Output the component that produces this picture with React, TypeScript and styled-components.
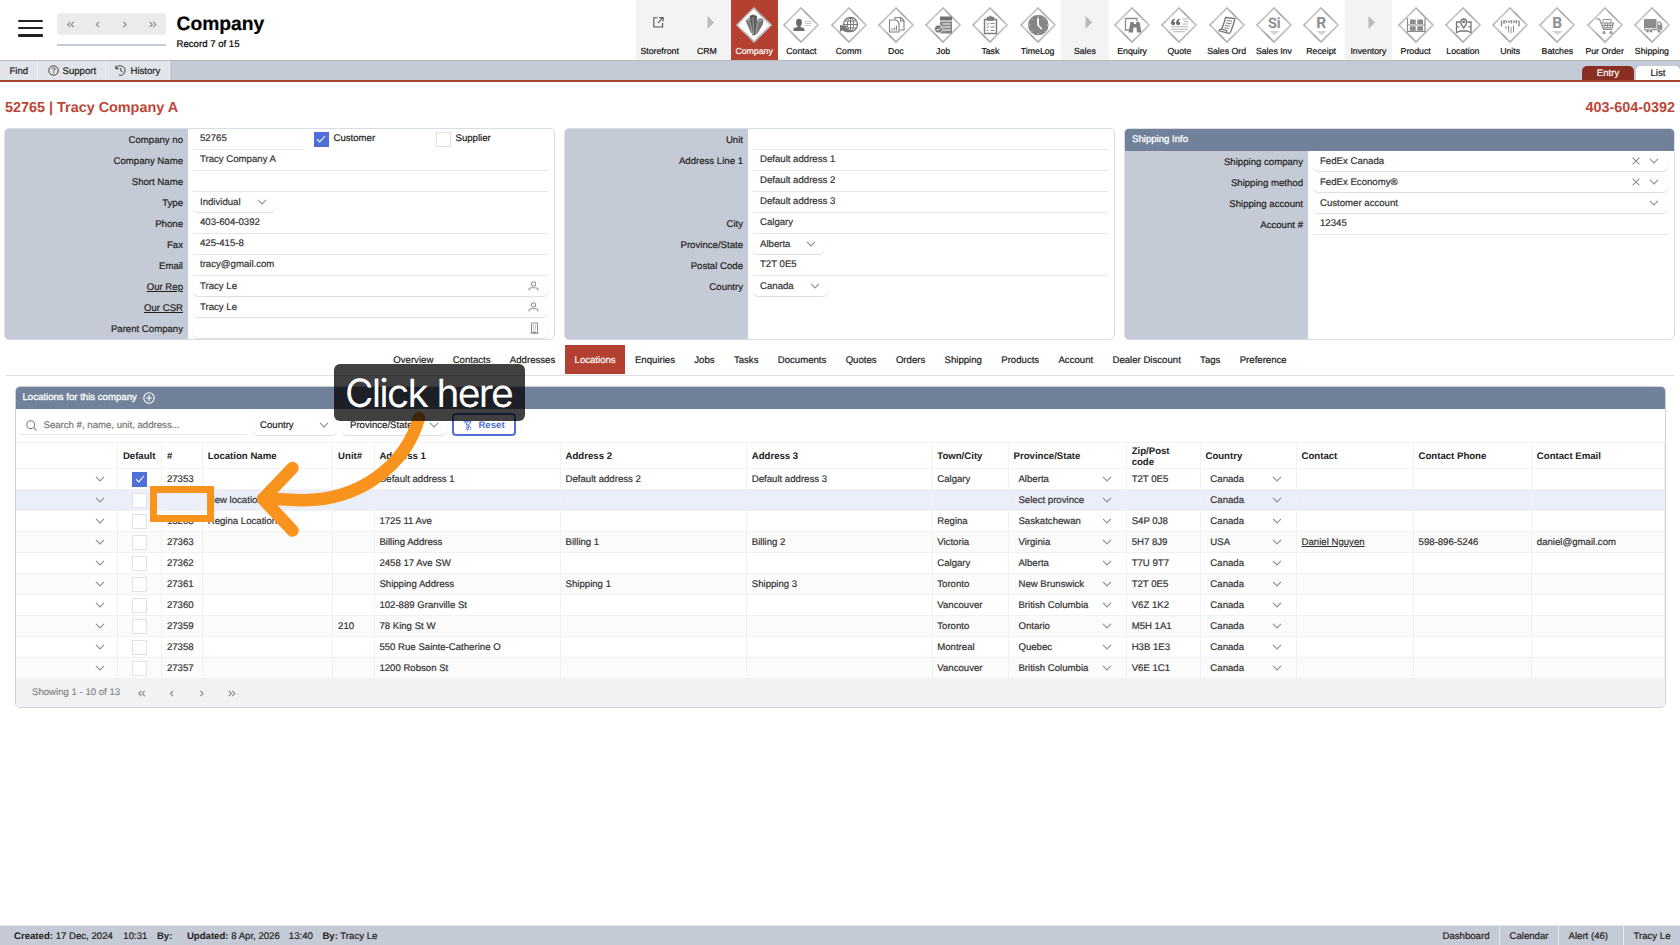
import React from 'react';
import styled, {createGlobalStyle, css} from 'styled-components';

const colors = {
    red: '#b34030',
    redDark: '#8a2f23',
    redText: '#bc4637',
    slate: '#708199',
    bar: '#c5cbd6',
    barLight: '#e1e5eb',
    blue: '#5070d8',
    line: '#e6e6e6',
    cellLine: '#f1f1f2',
    icon: '#8c8c8c',
    orange: '#f8941d',
};

const modules = [
    'Storefront',
    'CRM',
    'Company',
    'Contact',
    'Comm',
    'Doc',
    'Job',
    'Task',
    'TimeLog',
    'Sales',
    'Enquiry',
    'Quote',
    'Sales Ord',
    'Sales Inv',
    'Receipt',
    'Inventory',
    'Product',
    'Location',
    'Units',
    'Batches',
    'Pur Order',
    'Shipping',
];
const groups = ['Storefront', 'CRM', 'Sales', 'Inventory'];

const tabs = [
    'Overview',
    'Contacts',
    'Addresses',
    'Locations',
    'Enquiries',
    'Jobs',
    'Tasks',
    'Documents',
    'Quotes',
    'Orders',
    'Shipping',
    'Products',
    'Account',
    'Dealer Discount',
    'Tags',
    'Preference',
];

const headers = [
    '',
    'Default',
    '#',
    'Location Name',
    'Unit#',
    'Address 1',
    'Address 2',
    'Address 3',
    'Town/City',
    'Province/State',
    'Zip/Post code',
    'Country',
    'Contact',
    'Contact Phone',
    'Contact Email',
];

interface ILocation {
    no: string;
    name?: string;
    unit?: string;
    address: string[];
    city?: string;
    province: string;
    zip?: string;
    country: string;
    contact?: string;
    phone?: string;
    email?: string;
    isDefault?: boolean;
    selected?: boolean;
}

const locations: ILocation[] = [
    {
        no: '27353',
        address: ['Default address 1', 'Default address 2', 'Default address 3'],
        city: 'Calgary',
        province: 'Alberta',
        zip: 'T2T 0E5',
        country: 'Canada',
        isDefault: true,
    },
    {
        no: '',
        name: 'New location',
        address: ['', '', ''],
        province: 'Select province',
        country: 'Canada',
        selected: true,
    },
    {
        no: '13208',
        name: 'Regina Location',
        address: ['1725 11 Ave', '', ''],
        city: 'Regina',
        province: 'Saskatchewan',
        zip: 'S4P 0J8',
        country: 'Canada',
    },
    {
        no: '27363',
        address: ['Billing Address', 'Billing 1', 'Billing 2'],
        city: 'Victoria',
        province: 'Virginia',
        zip: '5H7 8J9',
        country: 'USA',
        contact: 'Daniel Nguyen',
        phone: '598-896-5246',
        email: 'daniel@gmail.com',
    },
    {
        no: '27362',
        address: ['2458 17 Ave SW', '', ''],
        city: 'Calgary',
        province: 'Alberta',
        zip: 'T7U 9T7',
        country: 'Canada',
    },
    {
        no: '27361',
        address: ['Shipping Address', 'Shipping 1', 'Shipping 3'],
        city: 'Toronto',
        province: 'New Brunswick',
        zip: 'T2T 0E5',
        country: 'Canada',
    },
    {
        no: '27360',
        address: ['102-889 Granville St', '', ''],
        city: 'Vancouver',
        province: 'British Columbia',
        zip: 'V6Z 1K2',
        country: 'Canada',
    },
    {
        no: '27359',
        unit: '210',
        address: ['78 King St W', '', ''],
        city: 'Toronto',
        province: 'Ontario',
        zip: 'M5H 1A1',
        country: 'Canada',
    },
    {
        no: '27358',
        address: ['550 Rue Sainte-Catherine O', '', ''],
        city: 'Montreal',
        province: 'Quebec',
        zip: 'H3B 1E3',
        country: 'Canada',
    },
    {
        no: '27357',
        address: ['1200 Robson St', '', ''],
        city: 'Vancouver',
        province: 'British Columbia',
        zip: 'V6E 1C1',
        country: 'Canada',
    },
];

/* ---------- icons ---------- */

const ChevronDown = () => (
    <svg width='10' height='6' viewBox='0 0 10 6' fill='none'>
        <path d='M1 0.8 5 4.9 9 0.8' stroke='#8f8f8f' strokeWidth='1.1' />
    </svg>
);

const arrows = {
    first: 'M5 1 2 4 5 7M9 1 6 4 9 7',
    prev: 'M7 1 4 4 7 7',
    next: 'M4 1 7 4 4 7',
    last: 'M2 1 5 4 2 7M6 1 9 4 6 7',
};

const Arrow = ({kind}: {kind: keyof typeof arrows}) => (
    <svg width='9.5' height='7' viewBox='0 0 11 8' fill='none'>
        <path d={arrows[kind]} stroke='#8e8e8e' strokeWidth='1.4' />
    </svg>
);

const Cross = () => (
    <svg width='8' height='8' viewBox='0 0 8 8' fill='none'>
        <path d='M0.6 0.6 7.4 7.4M7.4 0.6 0.6 7.4' stroke='#8f8f8f' strokeWidth='1.1' />
    </svg>
);

const PersonIcon = () => (
    <svg width='11' height='10' viewBox='0 0 11 10' fill='none' stroke='#969696' strokeWidth='1.1'>
        <circle cx='5.5' cy='2.9' r='2.1' />
        <path d='M1 9.6V9c0-1.4 1-2.3 2.4-2.3h4.2C9 6.7 10 7.6 10 9v.6' />
    </svg>
);

const BuildingIcon = () => (
    <svg width='9' height='12' viewBox='0 0 9 12' fill='none' stroke='#8f8f8f'>
        <path d='M1.5 1h6v10h-6zM0.5 11h8' />
        <path d='M3 3.2h1M5 3.2h1M3 5.2h1M5 5.2h1M3 7.2h1M5 7.2h1M4 9v2h1V9' strokeWidth='0.9' />
    </svg>
);

const CheckIcon = () => (
    <svg width='10' height='8' viewBox='0 0 10 8' fill='none'>
        <path d='M1 4.2 3.7 6.9 9 1' stroke='#fff' strokeWidth='1.1' />
    </svg>
);

const HelpIcon = () => (
    <svg width='11' height='11' viewBox='0 0 22 22' fill='none' stroke='#333' strokeWidth='1.9'>
        <circle cx='11' cy='11' r='9.5' />
        <path d='M8 8.5c0-1.7 1.3-2.9 3-2.9s3 1.2 3 2.7c0 2.2-3 2.3-3 4.7M11 14.8v2' />
    </svg>
);

const HistoryIcon = () => (
    <svg width='11' height='11' viewBox='0 0 22 22' fill='none' stroke='#333' strokeWidth='1.9'>
        <path d='M1.5 1.5v6h6M2.2 7A9.3 9.3 0 1 1 8 20' />
        <path d='M11.5 6v5.5l4 2.5' />
    </svg>
);

const SearchIcon = () => (
    <svg width='11' height='11' viewBox='0 0 11 11' fill='none' stroke='#808080' strokeWidth='1.1'>
        <circle cx='4.7' cy='4.7' r='3.9' />
        <path d='M7.6 7.6 10.4 10.4' />
    </svg>
);

const PlusCircle = () => (
    <svg width='12' height='12' viewBox='0 0 12 12' fill='none' stroke='#fff' strokeWidth='1.1'>
        <circle cx='6' cy='6' r='5.2' />
        <path d='M6 3v6M3 6h6' />
    </svg>
);

const FilterIcon = () => (
    <svg width='10' height='10' viewBox='0 0 10 10' fill='none' stroke={colors.blue}>
        <path d='M0.5 0.8h7.6M2.6 2.6 4 4.3v4.9L5.7 8V4.5M2 0.8l5.4 5.2M6 3.7 8.3 0.8' strokeWidth='1' />
        <path d='M7 6.8h1.6M7 8.5h1.2' strokeWidth='0.8' />
    </svg>
);

const glyph = (name: string) => {
    const g = colors.icon;
    switch (name) {
        case 'Company':
            return (
                <g fill='#747474'>
                    <path d='M11.5 15.5 15 13 19 15.5 20 28.5 17 28z' />
                    <path d='M15.5 11 19 9.5 23 11 22 29.5 18.5 30.5z' fill='#5a5a5a' />
                    <path d='M22 15.5 26 13 29.5 14.5 29 19 23.5 28.5 21 29.5z' />
                    <path d='M11.5 15.5 15 13 17.5 14.5 14 17zM22 15.5 26 13 29.5 14.5 25.5 17.5z' fill='#9a9a9a' />
                    <path d='M16 17 18.5 29M19 12.5 19.5 29M24 17.5 22 28.5' stroke='#d0d0d0' strokeWidth='0.6' />
                </g>
            );
        case 'Contact':
            return (
                <g fill='#6b6b6b'>
                    <ellipse cx='18' cy='17.5' rx='3' ry='3.7' />
                    <path d='M12.5 26v-1.8c0-1.3 3-1.7 4.3-2.7V20h2.4v1.5c1.3 1 4.3 1.4 4.3 2.7V26z' />
                    <path d='M23.5 16.5h7M23.5 18.5h7M23.5 20.5h7' stroke='#c2c2c2' strokeWidth='0.9' />
                </g>
            );
        case 'Comm':
            return (
                <g fill='none' stroke='#777'>
                    <circle cx='21.5' cy='19.5' r='7' strokeWidth='1.3' />
                    <ellipse cx='21.5' cy='19.5' rx='3' ry='7' />
                    <path d='M14.5 19.5h14M16 16h11M16 23h11M21.5 12.5v14' />
                    <path d='M11 20v7l2.2-1.7c3.5 2.7 8 2.7 11.2.2-3.5 0-6-1-7.5-3l1.8-1.5z' fill='#777' stroke='none' />
                </g>
            );
        case 'Doc':
            return (
                <g fill='none' stroke='#808080' strokeWidth='1.1'>
                    <path d='M13.5 15h7l2.5 2.5V27h-9.5z' />
                    <path d='M19 14.5v-2h6l3 3V25h-4.500M24.5 12.5V16H28' />
                    <path d='M16 25.5v-2M18.2 25.5v-3M20.4 25.5v-5' />
                </g>
            );
        case 'Job':
            return (
                <g>
                    <path d='M17 11.5h12v4H17z' fill='#6f6f6f' />
                    <path d='M17 16.5h12v12H17z' fill='#858585' />
                    <path d='M19.5 19h8M19.5 22h8M19.5 25h8' stroke='#fff' strokeWidth='1.1' />
                    <circle cx='15.5' cy='24' r='4' fill='#777' stroke='#fff' strokeWidth='0.7' />
                    <path d='M13.5 24 15 25.6 17.8 22.3' fill='none' stroke='#fff' />
                </g>
            );
        case 'Task':
            return (
                <g fill='none' stroke='#7b7b7b' strokeWidth='1.4'>
                    <path d='M14.5 14.5h12v14h-12z' />
                    <path d='M17.5 12.5h6V15h-6zM19.5 11.5h2' fill='#7b7b7b' />
                    <path d='M16.5 18.5l1 1 1.5-2M20.5 18.5h4M16.5 21.7l1 1 1.5-2M20.5 22h4M16.5 25.3h2M20.5 25.5h4' strokeWidth='0.9' />
                </g>
            );
        case 'TimeLog':
            return (
                <g>
                    <circle cx='20.3' cy='20' r='10.3' fill='#858585' />
                    <path d='M20 13v7l3.7 4' fill='none' stroke='#fff' strokeWidth='1.7' />
                    <path d='M20.3 10.5V12M20.3 28v1.5M10.8 20h1.5M28.3 20h1.5M13.6 13.3l1 1M27 13.3l-1 1M13.6 26.7l1-1M27 26.7l-1-1' stroke='#ddd' strokeWidth='0.9' />
                </g>
            );
        case 'Enquiry':
            return (
                <g fill='#808080'>
                    <path d='M18 25h-4.5V13.5H25v3' fill='none' stroke='#8c8c8c' strokeWidth='1.3' />
                    <path d='M18.5 17h3l.7 2h1.6l.7-2h3l2 10.5H25l-.5-5h-3l-.5 5h-4.5z' />
                </g>
            );
        case 'Quote':
            return (
                <g>
                    <path d='M12 18c0-2 1-4 3.7-4.3l.3 1c-1 .3-1.5 1-1.5 1.8 1.2 0 1.7.8 1.7 1.7 0 2.6-4.2 2.6-4.2-.2zM17 18c0-2 1-4 3.7-4.3l.3 1c-1 .3-1.5 1-1.5 1.8 1.2 0 1.7.8 1.7 1.7 0 2.6-4.2 2.6-4.2-.2z' fill='#6f6f6f' />
                    <path d='M23 14h6M25 16.5h4M23 19h6M12 21.8h17M12 24.3h17M14 26.8h12' stroke='#b5b5b5' strokeWidth='1.1' />
                </g>
            );
        case 'Sales Ord':
            return (
                <g fill='none' stroke='#747474' strokeWidth='1.3'>
                    <path d='M18.5 12.5l9.5 1c-1 4.5-2.5 9-4.5 13.5-.8 1.7-2.5 1.5-3.5.8l-8-2c.2-1.5 1.3-1.8 2.5-1.7 2-3.5 3-7.5 4-11.6z' />
                    <path d='M14.5 24.2l5 1.2c0 1.2.3 2 1 2.3' />
                    <path d='M19.5 15.5l5.5.7M19 18l5.5.7M18 20.5l5.3.7M17.3 22.8l4.5.6' strokeWidth='0.9' />
                </g>
            );
        case 'Product':
            return (
                <g fill={g}>
                    <path d='M11.5 13v14.5M29 13v14.5M12 20h17M12 26.3h17' stroke={g} strokeWidth='1.2' fill='none' />
                    <path d='M14 14.5h5.7V19H14zM21.3 14.5H27V19h-5.7zM14 21.3h5.7v4.5H14zM21.3 21.3H27v4.5h-5.7z' />
                </g>
            );
        case 'Location':
            return (
                <g fill='none' stroke='#767676' strokeWidth='1.3'>
                    <path d='M17 17h-3.5v10.5l4-1.5H24l4 1.5V17h-3.5M13.5 22.5l3-1M28 22.5l-3-1' />
                    <path d='M20.7 23c-2-2.5-3-4.2-3-6a3 3 0 0 1 6 0c0 1.8-1 3.5-3 6z' />
                    <circle cx='20.7' cy='16.8' r='0.9' />
                </g>
            );
        case 'Units':
            return (
                <g stroke={g} strokeWidth='1.4' fill='none'>
                    <path d='M11.5 15.5v6M14 15.5V19M16.5 15.5V18M19 15.5V18M21.5 15.5v3M24 15.5V18M26.5 15.5v3M29 15.5v6' />
                    <path d='M16 21v3M18.5 20.5v7M21 22v6M23.5 20.5v7M13 16h3M20 16h2M25 16h2' strokeWidth='1' />
                </g>
            );
        case 'Pur Order':
            return (
                <g fill='none' stroke={g} strokeWidth='1.2'>
                    <path d='M11 14h3.5l4 10.5h9M16 18h12.5L27 22.8h-9M16.7 20.4h10.7' />
                    <path d='M18 17.5v-3h8v3M20 17.5v5M22.5 17.5v5M25 17.5v5' strokeWidth='0.9' />
                    <circle cx='19' cy='27.5' r='1' />
                    <circle cx='26' cy='27.5' r='1' />
                </g>
            );
        case 'Shipping':
            return (
                <g fill={g}>
                    <path d='M12 14h12.5v9H12zM12 23.7h18v1.5H12z' />
                    <path d='M25.3 16.5h3l2 3V24h-5zM26.3 17.5v2.2h2.5l-1.2-2.2z' fillRule='evenodd' />
                    <circle cx='15.5' cy='26' r='1.8' stroke='#fff' strokeWidth='0.5' />
                    <circle cx='19' cy='26' r='1.8' stroke='#fff' strokeWidth='0.5' />
                    <circle cx='27' cy='26' r='1.8' stroke='#fff' strokeWidth='0.5' />
                </g>
            );
        default:
            // Sales Inv, Receipt and Batches only carry their initials
            return (
                <g>
                    <text
                        x='20.3'
                        y='23.3'
                        textAnchor='middle'
                        fontFamily='Roboto, sans-serif'
                        fontWeight='700'
                        fontSize={name === 'Sales Inv' ? 14.5 : 15.5}
                        fill='#8f8f8f'
                    >
                        {name === 'Sales Inv' ? 'Si' : name[0]}
                    </text>
                    <path d='M15 26h11l-5.5 4z' fill='#d2d2d2' />
                </g>
            );
    }
};

const ModuleIcon = ({name}: {name: string}) => {
    if (name === 'Storefront') {
        return (
            <svg width='40' height='40' viewBox='0 0 40 40' fill='none' stroke='#555' strokeWidth='1.1'>
                <path d='M17.5 12.8h-3.7V22h8.8v-4' />
                <path d='M19.2 12.6h3.9v3.9M22.9 12.8l-5 5' />
            </svg>
        );
    }
    if (groups.includes(name)) {
        return (
            <svg width='40' height='40' viewBox='0 0 40 40'>
                <path d='M20.5 11v13l6.5-6.5z' fill='#b9b9b9' />
            </svg>
        );
    }
    return (
        <svg width='40' height='40' viewBox='0 0 40 40'>
            <defs>
                <linearGradient id='edge' x1='0' y1='0' x2='1' y2='0.5'>
                    <stop offset='0' stopColor='#8e8e8e' />
                    <stop offset='0.3' stopColor='#c9c9c9' />
                    <stop offset='0.6' stopColor='#a0a0a0' />
                    <stop offset='1' stopColor='#c4c4c4' />
                </linearGradient>
            </defs>
            <path d='M20 3 37 20 20 37 3 20z' fill='#fff' stroke='url(#edge)' strokeWidth='1.7' />
            {glyph(name)}
        </svg>
    );
};

/* ---------- parts ---------- */

type FieldProps = {
    label: string;
    value?: string;
    kind?: 'line' | 'select' | 'lookup';
    link?: boolean;
    children?: React.ReactNode;
};

const Field = ({label, value, kind = 'line', link, children}: FieldProps) => (
    <FieldRow>
        <FieldLabel $link={link}>{label}</FieldLabel>
        <FieldValue $kind={kind}>
            <span>{value}</span>
            {kind === 'select' && <ChevronDown />}
            {children && <FieldTools>{children}</FieldTools>}
        </FieldValue>
    </FieldRow>
);

const LocationRow = ({row}: {row: ILocation}) => (
    <Row $selected={row.selected}>
        <Cell $align='chevron'>
            <ChevronDown />
        </Cell>
        <Cell $align='center'>
            <Checkbox $checked={row.isDefault}>{row.isDefault && <CheckIcon />}</Checkbox>
        </Cell>
        <Cell>{row.no}</Cell>
        <Cell>{row.name}</Cell>
        <Cell>{row.unit}</Cell>
        {row.address.map((line, i) => (
            <Cell key={i}>{line}</Cell>
        ))}
        <Cell>{row.city}</Cell>
        <Cell $align='select'>
            {row.province}
            <ChevronDown />
        </Cell>
        <Cell>{row.zip}</Cell>
        <Cell $align='select'>
            {row.country}
            <ChevronDown />
        </Cell>
        <Cell>
            <u>{row.contact}</u>
        </Cell>
        <Cell>{row.phone}</Cell>
        <Cell>{row.email}</Cell>
    </Row>
);

const App = () => {
    return (
        <Page>
            <GlobalStyle />
            <Header>
                <Hamburger>
                    <i />
                    <i />
                    <i />
                </Hamburger>
                <RecordNav>
                    <NavPill>
                        <Arrow kind='first' />
                        <Arrow kind='prev' />
                        <Arrow kind='next' />
                        <Arrow kind='last' />
                    </NavPill>
                    <NavTrack />
                </RecordNav>
                <Heading>
                    <h1>Company</h1>
                    <p>Record 7 of 15</p>
                </Heading>
                <Modules>
                    {modules.map(name => (
                        <Module key={name} $active={name === 'Company'} $group={groups.includes(name)}>
                            <ModuleIcon name={name} />
                            <span>{name}</span>
                        </Module>
                    ))}
                </Modules>
            </Header>

            <Toolbar>
                <ToolButton>Find</ToolButton>
                <ToolButton>
                    <HelpIcon />
                    Support
                </ToolButton>
                <ToolButton>
                    <HistoryIcon />
                    History
                </ToolButton>
                <ViewTabs>
                    <ViewTab $active>Entry</ViewTab>
                    <ViewTab>List</ViewTab>
                </ViewTabs>
            </Toolbar>

            <RecordTitle>
                <span>52765 | Tracy Company A</span>
                <span>403-604-0392</span>
            </RecordTitle>

            <Panels>
                <Panel>
                    <FieldRow>
                        <FieldLabel>Company no</FieldLabel>
                        <CompanyNo>52765</CompanyNo>
                        <CheckLabel $width={122}>
                            <Checkbox $checked>
                                <CheckIcon />
                            </Checkbox>
                            Customer
                        </CheckLabel>
                        <CheckLabel>
                            <Checkbox />
                            Supplier
                        </CheckLabel>
                    </FieldRow>
                    <Field label='Company Name' value='Tracy Company A' />
                    <Field label='Short Name' />
                    <Field label='Type' value='Individual' kind='select' />
                    <Field label='Phone' value='403-604-0392' />
                    <Field label='Fax' value='425-415-8' />
                    <Field label='Email' value='tracy@gmail.com' />
                    <Field label='Our Rep' value='Tracy Le' kind='lookup' link>
                        <PersonIcon />
                    </Field>
                    <Field label='Our CSR' value='Tracy Le' kind='lookup' link>
                        <PersonIcon />
                    </Field>
                    <Field label='Parent Company' kind='lookup'>
                        <BuildingIcon />
                    </Field>
                </Panel>
                <Panel>
                    <Field label='Unit' />
                    <Field label='Address Line 1' value='Default address 1' />
                    <Field label='' value='Default address 2' />
                    <Field label='' value='Default address 3' />
                    <Field label='City' value='Calgary' />
                    <Field label='Province/State' value='Alberta' kind='select' />
                    <Field label='Postal Code' value='T2T 0E5' />
                    <Field label='Country' value='Canada' kind='select' />
                </Panel>
                <Panel>
                    <PanelHeader>Shipping Info</PanelHeader>
                    <Field label='Shipping company' value='FedEx Canada' kind='lookup'>
                        <Cross />
                        <ChevronDown />
                    </Field>
                    <Field label='Shipping method' value='FedEx Economy®' kind='lookup'>
                        <Cross />
                        <ChevronDown />
                    </Field>
                    <Field label='Shipping account' value='Customer account' kind='lookup'>
                        <ChevronDown />
                    </Field>
                    <Field label='Account #' value='12345' />
                </Panel>
            </Panels>

            <Tabs>
                {tabs.map(tab => (
                    <Tab key={tab} $active={tab === 'Locations'}>
                        {tab}
                    </Tab>
                ))}
            </Tabs>

            <Locations>
                <PanelHeader>
                    Locations for this company
                    <PlusCircle />
                </PanelHeader>
                <Filters>
                    <Search>
                        <SearchIcon />
                        Search #, name, unit, address...
                    </Search>
                    <FilterSelect $width={85}>
                        Country
                        <ChevronDown />
                    </FilterSelect>
                    <FilterSelect $width={105}>
                        Province/State
                        <ChevronDown />
                    </FilterSelect>
                    <Reset>
                        <FilterIcon />
                        Reset
                    </Reset>
                </Filters>
                <HeadRow>
                    {headers.map((text, i) => (
                        <Cell key={i}>{text}</Cell>
                    ))}
                </HeadRow>
                {locations.map((row, i) => (
                    <LocationRow key={i} row={row} />
                ))}
                <Pager>
                    <span>Showing 1 - 10 of 13</span>
                    <Arrow kind='first' />
                    <Arrow kind='prev' />
                    <Arrow kind='next' />
                    <Arrow kind='last' />
                </Pager>
            </Locations>

            <StatusBar>
                <StatusText $gap={10.5}>
                    <b>Created:</b> 17 Dec, 2024
                </StatusText>
                <StatusText $gap={9.5}>10:31</StatusText>
                <StatusText $gap={14.5}>
                    <b>By:</b>
                </StatusText>
                <StatusText $gap={9}>
                    <b>Updated:</b> 8 Apr, 2026
                </StatusText>
                <StatusText $gap={9.5}>13:40</StatusText>
                <StatusText $gap={0}>
                    <b>By:</b> Tracy Le
                </StatusText>
                <StatusLinks>
                    <StatusLink $width={67}>Dashboard</StatusLink>
                    <StatusLink $width={59}>Calendar</StatusLink>
                    <StatusLink $width={65}>Alert (46)</StatusLink>
                    <StatusLink $width={56.5}>Tracy Le</StatusLink>
                </StatusLinks>
            </StatusBar>

            {/* guide shown on top of the page */}
            <Highlight />
            <GuideArrow width='200' height='150' viewBox='240 400 200 150' fill='none'>
                <path
                    d='M419 418C406 464 360 503 296 500L263 498.5M292.5 468 263 499 292.5 530.5'
                    stroke={colors.orange}
                    strokeWidth='12.5'
                    strokeLinecap='round'
                    strokeLinejoin='round'
                />
            </GuideArrow>
            <Callout>Click here</Callout>
        </Page>
    );
};

export default App;

const GlobalStyle = createGlobalStyle`
    * {
        box-sizing: border-box;
    }
    body {
        margin: 0;
        background: #fff;
        overflow: hidden;
    }
    svg {
        flex-shrink: 0;
        display: block;
    }
`;

const Page = styled.div`
    position: relative;
    width: 1680px;
    height: 945px;
    display: flex;
    flex-direction: column;
    font-family: 'Liberation Sans', Arial, sans-serif;
    font-size: 9.625px;
    line-height: 12px;
    color: #222;
    text-rendering: geometricPrecision;
    -webkit-text-stroke: 0.2px;
    white-space: nowrap;
`;

const Header = styled.header`
    height: 61px;
    border-bottom: 1.5px solid #b8b9bb;
    display: flex;
    padding-left: 18px;
`;

const Hamburger = styled.div`
    width: 25px;
    margin: 20px 14px 0 0;
    display: flex;
    flex-direction: column;
    gap: 5px;
    i {
        height: 2.2px;
        background-color: #222;
        border-radius: 1px;
    }
`;

const RecordNav = styled.div`
    width: 109px;
    padding-top: 13px;
`;

const NavPill = styled.div`
    height: 22px;
    border-radius: 4px;
    background-color: #ebebeb;
    display: flex;
    align-items: center;
    justify-content: space-around;
`;

const NavTrack = styled.div`
    height: 2px;
    margin-top: 9px;
    background-color: ${colors.bar};
`;

const Heading = styled.div`
    margin-left: 10.5px;
    color: #000;
    h1 {
        margin: 14px 0 0;
        font-size: 19.25px;
        line-height: 22px;
    }
    p {
        margin: 3px 0 0;
    }
`;

const Modules = styled.nav`
    display: flex;
    margin-left: auto;
    padding-right: 4.5px;
`;

interface IModule {
    $active?: boolean;
    $group?: boolean;
}

const Module = styled.div<IModule>`
    width: 47.25px;
    padding-top: 5px;
    display: flex;
    flex-direction: column;
    align-items: center;
    font-size: 8.75px;
    color: ${props => (props.$active ? 'white' : '#111')};
    background-color: ${props => (props.$active ? colors.red : props.$group ? '#f3f3f3' : 'white')};
`;

const Toolbar = styled.div`
    height: 21px;
    display: flex;
    background-color: ${colors.bar};
    border-bottom: 2px solid #a64535;
`;

const ToolButton = styled.div`
    display: flex;
    align-items: center;
    gap: 4px;
    padding: 2px 8.8px 0 9.5px;
    background-color: ${colors.barLight};
    border-right: 1px solid #eef0f3;
    svg {
        margin-bottom: 2px;
    }
`;

const ViewTabs = styled.div`
    display: flex;
    align-items: flex-end;
    gap: 2px;
    margin-left: auto;
`;

const ViewTab = styled.div<{$active?: boolean}>`
    width: ${props => (props.$active ? 52 : 44)}px;
    height: 14px;
    line-height: 15px;
    text-align: center;
    border-radius: 5px 5px 0 0;
    color: ${props => (props.$active ? 'white' : '#222')};
    background-color: ${props => (props.$active ? colors.redDark : 'white')};
`;

const RecordTitle = styled.div`
    height: 46px;
    padding: 18px 5px 0;
    display: flex;
    justify-content: space-between;
    font-size: 14.4px;
    line-height: 16px;
    font-weight: bold;
    color: ${colors.redText};
    -webkit-text-stroke: 0;
`;

const Panels = styled.div`
    display: grid;
    grid-template-columns: repeat(3, 551px);
    gap: 9px;
    padding: 0 4px;
    height: 212px;
`;

const Panel = styled.section`
    border: 1px solid #d6dde8;
    border-radius: 5px;
    overflow: hidden;
    background: linear-gradient(to right, ${colors.bar} 183px, #fff 183px);
`;

const PanelHeader = styled.div`
    height: 22px;
    padding-left: 7px;
    display: flex;
    align-items: center;
    gap: 6.5px;
    color: white;
    background-color: ${colors.slate};
    -webkit-text-stroke: 0.3px;
`;

const FieldRow = styled.div`
    height: 21px;
    display: flex;
`;

const FieldLabel = styled.div<{$link?: boolean}>`
    width: 178px;
    margin-right: 9.5px;
    line-height: 23px;
    text-align: right;
    text-decoration: ${props => (props.$link ? 'underline' : 'none')};
`;

const FieldValue = styled.div<{$kind: 'line' | 'select' | 'lookup'}>`
    height: 20.5px;
    padding-left: 7.5px;
    display: flex;
    align-items: center;
    color: #333;
    border-bottom: 1px solid ${colors.line};
    > span {
        padding-top: 1px;
    }
    ${props => props.$kind !== 'select' && 'width: 355px;'}
    ${props =>
        props.$kind !== 'line' &&
        css`
            height: 20px;
            border-bottom: none;
            border-radius: 5px;
            box-shadow: 0 1px 1px #dedede;
        `}
    ${props =>
        props.$kind === 'select' &&
        css`
            padding-right: 8px;
            gap: 16px;
        `}
`;

const FieldTools = styled.div`
    margin-left: auto;
    padding-right: 8.5px;
    display: flex;
    align-items: center;
    gap: 9.5px;
`;

const CompanyNo = styled.div`
    width: 112px;
    height: 20.5px;
    line-height: 20.5px;
    padding-left: 7.5px;
    margin-right: 9px;
    color: #333;
    border-bottom: 1px solid ${colors.line};
`;

const CheckLabel = styled.div<{$width?: number}>`
    width: ${props => (props.$width ? props.$width + 'px' : 'auto')};
    height: 20px;
    display: flex;
    align-items: center;
    gap: 5px;
`;

const Checkbox = styled.div<{$checked?: boolean}>`
    width: 15px;
    height: 15px;
    flex-shrink: 0;
    display: flex;
    align-items: center;
    justify-content: center;
    border: 1px solid ${props => (props.$checked ? colors.blue : '#e2e2e2')};
    background-color: ${props => (props.$checked ? colors.blue : 'white')};
`;

const Tabs = styled.div`
    margin: 5px 5px 0;
    height: 31px;
    display: flex;
    justify-content: center;
    border-bottom: 1px solid #dfdfdf;
`;

const Tab = styled.div<{$active?: boolean}>`
    height: 29px;
    line-height: 31px;
    padding: 0 9.65px;
    color: ${props => (props.$active ? 'white' : '#222')};
    background-color: ${props => (props.$active ? colors.red : 'white')};
`;

const Locations = styled.section`
    width: 1651px;
    height: 322px;
    margin: 10px 0 0 15px;
    border: 1px solid #cdd2d9;
    border-radius: 5px;
    overflow: hidden;
    > ${PanelHeader} {
        padding-left: 6.5px;
    }
`;

const Filters = styled.div`
    height: 33px;
    padding: 4px 0 0 4px;
    display: flex;
    gap: 5px;
`;

const Search = styled.div`
    width: 227px;
    height: 22px;
    padding: 4px 0 0 6px;
    display: flex;
    align-items: center;
    gap: 6.5px;
    color: #777;
    border-bottom: 1px solid ${colors.line};
    svg {
        margin-bottom: 1px;
    }
`;

const FilterSelect = styled.div<{$width: number}>`
    width: ${props => props.$width}px;
    height: 22px;
    padding: 3px 8px 0;
    display: flex;
    align-items: center;
    justify-content: space-between;
    border-radius: 5px;
    box-shadow: 0 1px 1px #dedede;
    svg {
        margin-bottom: 1px;
    }
`;

const Reset = styled.div`
    width: 64px;
    height: 23px;
    display: flex;
    align-items: center;
    justify-content: center;
    gap: 5px;
    padding-top: 2px;
    font-weight: bold;
    color: ${colors.blue};
    border: 2px solid ${colors.blue};
    border-radius: 4px;
    -webkit-text-stroke: 0;
`;

const Row = styled.div<{$selected?: boolean}>`
    height: 21px;
    display: grid;
    grid-template-columns:
        102.3px 44px 40.8px 130.4px 41.3px 186.2px 186.2px 185.5px
        76.3px 118.1px 73.8px 96.1px 117px 118.3px 1fr;
    color: #333;
    border-top: 1px solid ${colors.cellLine};
    &:nth-child(2n + 1) {
        background-color: #fbfbfb;
    }
    && {
        ${props => props.$selected && 'background-color: #eceefa;'}
    }
`;

interface ICell {
    $align?: 'center' | 'chevron' | 'select';
}

const Cell = styled.div<ICell>`
    padding: 2px 0 0 4.6px;
    display: flex;
    align-items: center;
    border-right: 1px solid ${colors.cellLine};
    ${props =>
        props.$align === 'center' &&
        css`
            padding: 0;
            justify-content: center;
        `}
    ${props =>
        props.$align === 'chevron' &&
        css`
            justify-content: flex-end;
            padding: 0 12.5px 0 0;
        `}
    ${props =>
        props.$align === 'select' &&
        css`
            justify-content: space-between;
            padding: 2px 13.8px 0 9.5px;
            svg {
                margin-bottom: 2px;
            }
        `}
`;

const HeadRow = styled(Row)`
    height: 26px;
    font-weight: bold;
    line-height: 10.5px;
    color: #222;
    -webkit-text-stroke: 0;
    && {
        background-color: white;
    }
    ${Cell} {
        padding: 4px 10px 0 4.6px;
        white-space: normal;
    }
`;

const Pager = styled.div`
    height: 30px;
    padding: 0 0 1px 16px;
    display: flex;
    align-items: center;
    gap: 20.7px;
    color: #888;
    background-color: #f1f2f4;
    border-top: 1px solid ${colors.cellLine};
    span {
        margin-right: -4px;
    }
`;

const StatusBar = styled.footer`
    height: 20px;
    margin-top: auto;
    padding-left: 14px;
    display: flex;
    align-items: center;
    background-color: ${colors.bar};
    border-top: 1px solid #dfe3e9;
`;

const StatusText = styled.div<{$gap: number}>`
    margin: 2px ${props => props.$gap}px 0 0;
    b {
        -webkit-text-stroke: 0;
    }
`;

const StatusLinks = styled.div`
    margin-left: auto;
    display: flex;
    align-self: stretch;
`;

const StatusLink = styled.div<{$width: number}>`
    width: ${props => props.$width}px;
    padding-left: 10px;
    line-height: 21px;
    border-right: 1px solid #e6e9ee;
    &:last-child {
        border-right: none;
    }
`;

const Highlight = styled.div`
    position: absolute;
    left: 150px;
    top: 486px;
    width: 64px;
    height: 36px;
    border: 7px solid ${colors.orange};
`;

const GuideArrow = styled.svg`
    position: absolute;
    left: 240px;
    top: 400px;
`;

const Callout = styled.div`
    position: absolute;
    left: 334px;
    top: 364px;
    width: 190.5px;
    height: 57px;
    line-height: 59px;
    text-align: center;
    font-family: Inter, sans-serif;
    font-size: 39px;
    letter-spacing: -1.75px;
    text-indent: -1.5px;
    color: white;
    background-color: rgba(0, 0, 0, 0.75);
    border-radius: 6px;
    -webkit-text-stroke: 0;
`;
